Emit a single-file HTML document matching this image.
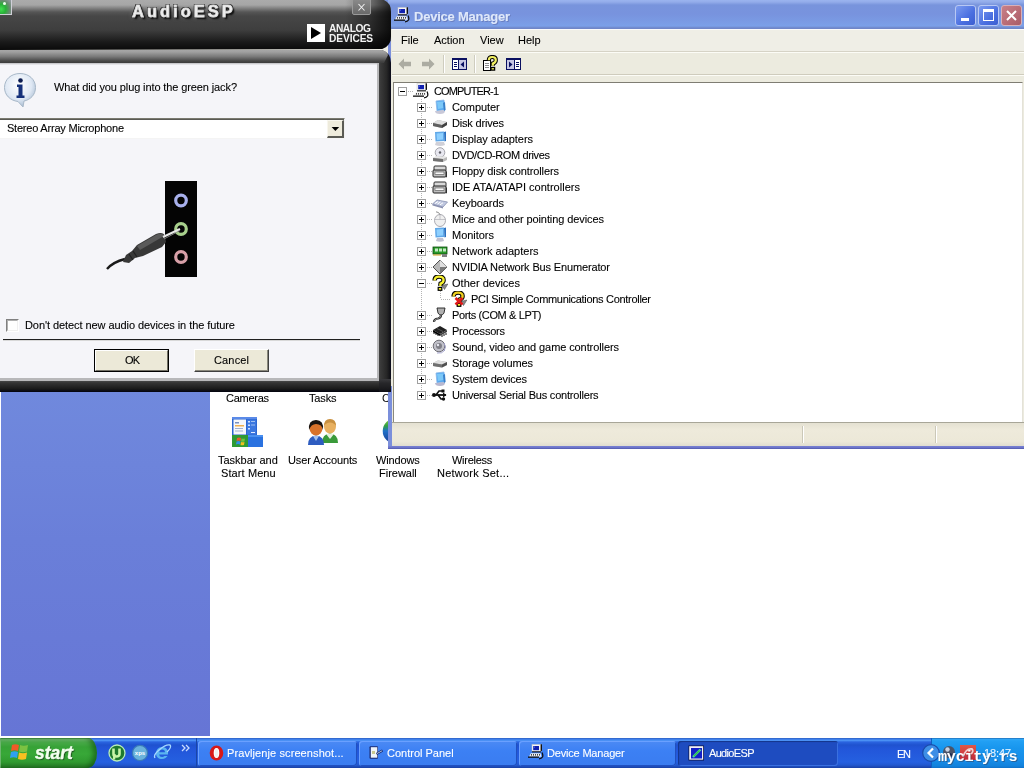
<!DOCTYPE html>
<html><head><meta charset="utf-8"><style>
html,body{margin:0;padding:0;width:1024px;height:768px;overflow:hidden;position:relative;background:#fff;font-family:"Liberation Sans",sans-serif;}
.a{position:absolute;}
span.a{will-change:transform;}
.t{position:absolute;white-space:pre;-webkit-font-smoothing:antialiased;will-change:transform;-webkit-text-stroke:0.1px currentColor;line-height:1;font-family:"Liberation Sans",sans-serif;font-size:11px;color:#000;z-index:50;}
</style></head><body>
<!-- Control panel background -->
<div class="a" style="left:0;top:0;width:1024px;height:738px;background:#fff;"></div>
<div class="a" style="left:0;top:0;width:1024px;height:30px;background:#7a96df;"></div>
<div class="a" style="left:0;top:30px;width:1024px;height:60px;background:#efeee6;"></div>
<div class="a" style="left:1px;top:90px;width:209px;height:646px;background:linear-gradient(#7a98e3,#7089dd 300px,#6a7fd9 450px,#6675d5);"></div>
<span class="a" style="left:381.5px;top:392.7px;font-size:11px;line-height:1;">C</span>
<!-- Taskbar and start menu icon -->
<svg class="a" style="left:231px;top:415px" width="34" height="34" viewBox="0 0 34 34">
  <rect x="1" y="2" width="25" height="19" rx="1.5" fill="#2c66d0"/>
  <rect x="1" y="2" width="25" height="2" fill="#5a8ae8"/>
  <rect x="2.5" y="4.5" width="12.5" height="15" fill="#f6f8fc"/>
  <rect x="4" y="7" width="4" height="1.5" fill="#7890c0"/><rect x="4" y="10" width="9" height="1.5" fill="#f0b050"/>
  <rect x="4" y="13" width="8" height="1" fill="#a0b0d0"/><rect x="4" y="15.5" width="8" height="1" fill="#a0b0d0"/>
  <rect x="16" y="4.5" width="9" height="15" fill="#3c78e0"/>
  <rect x="17" y="6" width="2" height="1.5" fill="#d0e0ff"/><rect x="17" y="9.5" width="2" height="1.5" fill="#d0e0ff"/><rect x="17" y="13" width="2" height="1.5" fill="#d0e0ff"/><rect x="20" y="6" width="4" height="1" fill="#a0c0f0"/><rect x="20" y="9.5" width="4" height="1" fill="#a0c0f0"/><rect x="20" y="17" width="4" height="1" fill="#e0e8ff"/>
  <rect x="1" y="20" width="16" height="12" fill="#2e9a34"/>
  <rect x="17" y="20" width="15" height="12" fill="#2a72e0"/>
  <rect x="17" y="20" width="15" height="2" fill="#4a90f0"/>
  <path d="M6 23 Q8 22 10 23 L9.5 26 Q7.5 25 5.5 26Z" fill="#e85a30"/><path d="M10.5 23.5 Q12.5 24 14 23.5 L13.5 26.5 Q11.5 27 10 26.5Z" fill="#70c040"/>
  <path d="M5.5 26.5 Q7.5 25.5 9.5 26.5 L9 29.5 Q7 28.5 5 29.5Z" fill="#3090e8"/><path d="M10 27 Q12 27.5 13.5 27 L13 30 Q11 30.5 9.5 30Z" fill="#f0c020"/>
</svg>
<!-- User accounts icon -->
<svg class="a" style="left:305px;top:415px" width="36" height="32" viewBox="0 0 36 32">
  <path d="M17 28 Q17 19 25 18.5 Q33 19 33 28 Z" fill="#3a9a3a"/>
  <path d="M21 19 L25 24 L29 19Z" fill="#e8f0e0"/>
  <ellipse cx="25" cy="11.5" rx="6" ry="7" fill="#e8b060"/>
  <path d="M19 11 Q19 4 25 4 Q31 4 31 11 Q29 7.5 25 7.5 Q21 7.5 19 11Z" fill="#c89040"/>
  <path d="M3 30 Q3 21 11 20.5 Q19 21 19 30 Z" fill="#2e5cc0"/>
  <path d="M8 21 L11 26 L14 21Z" fill="#a0c0f0"/>
  <ellipse cx="11" cy="13" rx="6.5" ry="7.5" fill="#d8722a"/>
  <path d="M4 15 Q3 5 11 5 Q19 5 18 15 Q17 9 11 9 Q6 9 4 15Z" fill="#1a1410"/>
</svg>
<!-- firewall globe partial -->
<svg class="a" style="left:380px;top:418px" width="9" height="27" viewBox="0 0 9 27">
  <defs><linearGradient id="gl" x1="0" y1="0" x2="0" y2="1"><stop offset="0" stop-color="#90d040"/><stop offset="0.3" stop-color="#30a040"/><stop offset="0.5" stop-color="#2070c8"/><stop offset="1" stop-color="#1a3a90"/></linearGradient></defs>
  <circle cx="15.5" cy="13" r="12.8" fill="url(#gl)"/>
</svg>
<!-- Device Manager window -->
<div class="a" id="dm" style="left:388px;top:0;width:640px;height:449px;background:#7b8fdb;">
  <div class="a" style="left:3px;top:29px;width:637px;height:417px;background:#ecebdf;"></div>
  <div class="a" style="left:3px;top:386px;width:1px;height:60px;background:#7b8fdb;"></div>
  <div class="a" style="left:0;top:0;width:640px;height:29px;background:linear-gradient(#9ab4ef 0px,#93acea 2px,#7894dc 5px,#7893de 14px,#7a9be4 22px,#7ba0e8 26px,#6f86c8 28px,#6f86c8 29px);"></div>
  <div class="a" style="left:4px;top:29px;width:636px;height:23px;background:#efeee6;border-top:1px solid #fbfbfb;box-sizing:border-box;"></div>
  <div class="a" style="left:4px;top:51px;width:636px;height:1px;background:#d6d3c6;"></div>
  <div class="a" style="left:4px;top:52px;width:636px;height:23px;background:#ecebdf;border-top:1px solid #fcfcf6;box-sizing:border-box;"></div>
  <div class="a" style="left:4px;top:74px;width:636px;height:1px;background:#cfccbd;"></div>
  <div class="a" style="left:4px;top:75px;width:636px;height:7px;background:#ecebdf;border-top:1px solid #fcfcf6;box-sizing:border-box;"></div>
  <div class="a" style="left:5px;top:82px;width:630px;height:341px;background:#fff;border-top:1px solid #7f7d73;border-left:1px solid #8a887d;border-right:1px solid #e4e2d8;box-sizing:border-box;"></div>
  <div class="a" style="left:4px;top:422px;width:636px;height:1px;background:#a8a698;"></div>
  <div class="a" style="left:4px;top:423px;width:636px;height:23px;background:linear-gradient(#e4e1d2,#eeeadb 30%,#ece8d8 80%,#e0ddd0);box-sizing:border-box;"></div>
  <div class="a" style="left:0;top:446px;width:640px;height:3px;background:linear-gradient(#7a82d4,#6a72c8 60%,#5058a8);"></div>
  <div class="a" style="left:414px;top:426px;width:1px;height:17px;background:#cbc8b8;"></div>
  <div class="a" style="left:415px;top:426px;width:1px;height:17px;background:#fff;"></div>
  <div class="a" style="left:547px;top:426px;width:1px;height:17px;background:#cbc8b8;"></div>
  <div class="a" style="left:548px;top:426px;width:1px;height:17px;background:#fff;"></div>
  <!-- title icon -->
  <svg class="a" style="left:6px;top:7px" width="16" height="16" viewBox="0 0 16 16"><rect x="4" y="0.5" width="9" height="7" fill="#f4f4f4" stroke="#c8c8c8" stroke-width="0.5"/><rect x="12.6" y="0.3" width="1.4" height="6.6" fill="#101010"/><rect x="5.2" y="2" width="5.8" height="4.2" fill="#1020b0"/><rect x="5.8" y="2.6" width="1" height="1" fill="#8090f0"/><rect x="4" y="7.3" width="9" height="1.1" fill="#101010"/><path d="M1 12.8 L2.8 9.2 L12.5 9.2 L13.5 12.8Z" fill="#f0f0f0"/><path d="M3 10.9 H12" stroke="#101010" stroke-width="1.1" stroke-dasharray="1 1"/><rect x="0" y="12.5" width="11" height="1.3" fill="#101010"/><path d="M14 8.5 Q15.3 11 14.5 13 Q13.5 14.8 11 14.8" fill="none" stroke="#101010" stroke-width="1.3"/></svg>
  <!-- title buttons -->
  <div class="a" style="left:567px;top:5px;width:21px;height:21px;box-sizing:border-box;border:1px solid #b8c8f4;border-radius:3px;background:linear-gradient(135deg,#7c9cf0,#4a6fe0 60%,#3c5fd0);"></div>
  <div class="a" style="left:573px;top:18px;width:8px;height:3px;background:#fff;"></div>
  <div class="a" style="left:590px;top:5px;width:21px;height:21px;box-sizing:border-box;border:1px solid #b8c8f4;border-radius:3px;background:linear-gradient(135deg,#7c9cf0,#4a6fe0 60%,#3c5fd0);"></div>
  <div class="a" style="left:595px;top:9px;width:11px;height:12px;box-sizing:border-box;border:1.5px solid #fff;border-top-width:3px;"></div>
  <div class="a" style="left:613px;top:5px;width:21px;height:21px;box-sizing:border-box;border:1px solid #d8b0b8;border-radius:3px;background:linear-gradient(135deg,#c88088,#b86a74 60%,#a85c68);"></div>
  <svg class="a" style="left:613px;top:5px" width="21" height="21" viewBox="0 0 21 21"><path d="M6 6 L15 15 M15 6 L6 15" stroke="#fff" stroke-width="2"/></svg>
  <!-- toolbar -->
  <svg class="a" style="left:10px;top:57px" width="14" height="14" viewBox="0 0 14 14"><path d="M0.5 7 L6 1.5 L6 4.8 L13 4.8 L13 9.2 L6 9.2 L6 12.5Z" fill="#acaca2"/></svg>
  <svg class="a" style="left:33px;top:57px" width="14" height="14" viewBox="0 0 14 14"><path d="M13.5 7 L8 1.5 L8 4.8 L1 4.8 L1 9.2 L8 9.2 L8 12.5Z" fill="#acaca2"/></svg>
  <div class="a" style="left:55px;top:55px;width:1px;height:18px;background:#cfcdbf;"></div>
  <div class="a" style="left:56px;top:55px;width:1px;height:18px;background:#fff;"></div>
  <svg class="a" style="left:64px;top:58px" width="15" height="12" viewBox="0 0 15 12" shape-rendering="crispEdges"><rect x="0" y="0" width="15" height="12" fill="#0a1060"/><rect x="1" y="2" width="5" height="9" fill="#fff"/><rect x="7" y="2" width="7" height="9" fill="#c8c8e4"/><rect x="2" y="4" width="3" height="1" fill="#0a1060"/><rect x="2" y="6" width="3" height="1" fill="#0a1060"/><rect x="2" y="8" width="3" height="1" fill="#0a1060"/><path d="M12 3.5 L8.5 6.5 L12 9.5Z" fill="#0a1060" shape-rendering="auto"/></svg>
  <div class="a" style="left:86px;top:55px;width:1px;height:18px;background:#cfcdbf;"></div>
  <div class="a" style="left:87px;top:55px;width:1px;height:18px;background:#fff;"></div>
  <svg class="a" style="left:94px;top:55px" width="16" height="17" viewBox="0 0 16 17" shape-rendering="crispEdges"><rect x="1" y="5" width="8" height="11" fill="#000"/><rect x="2" y="6" width="6" height="9" fill="#fff"/><rect x="3" y="8" width="4" height="1" fill="#8c8c8c"/><rect x="3" y="10" width="4" height="1" fill="#8c8c8c"/><rect x="3" y="12" width="4" height="1" fill="#8c8c8c"/></svg><svg class="a" style="left:94px;top:55px" width="16" height="17" viewBox="0 0 16 17"><path d="M6.8 5.2 Q6.8 2 10.2 2 Q13.8 2 13.8 5 Q13.8 7.6 10.8 8.6 L10.8 10.8" fill="none" stroke="#000" stroke-width="4.2"/><path d="M6.8 5.2 Q6.8 2 10.2 2 Q13.8 2 13.8 5 Q13.8 7.6 10.8 8.6 L10.8 10.8" fill="none" stroke="#f2f060" stroke-width="2.2"/><rect x="9" y="12.5" width="3.6" height="2.6" fill="#f2f060" stroke="#000" stroke-width="1.3"/></svg>
  <svg class="a" style="left:118px;top:58px" width="15" height="12" viewBox="0 0 15 12" shape-rendering="crispEdges"><rect x="0" y="0" width="15" height="12" fill="#0a1060"/><rect x="1" y="2" width="7" height="9" fill="#c8c8e4"/><rect x="9" y="2" width="5" height="9" fill="#fff"/><rect x="10" y="4" width="3" height="1" fill="#0a1060"/><rect x="10" y="6" width="3" height="1" fill="#0a1060"/><rect x="10" y="8" width="3" height="1" fill="#0a1060"/><path d="M3 3.5 L6.5 6.5 L3 9.5Z" fill="#0a1060" shape-rendering="auto"/></svg>
</div>
<div class="a" style="left:398px;top:87px;width:9px;height:9px;box-sizing:border-box;border:1px solid #a0a0a0;background:#fff;z-index:6;"></div><div class="a" style="left:400px;top:91px;width:5px;height:1px;background:#000;z-index:7;"></div>
<div class="a" style="left:408px;top:91px;width:5px;height:1px;z-index:4;background:repeating-linear-gradient(90deg,#b4b4b4 0,#b4b4b4 1px,transparent 1px,transparent 2px);"></div>
<svg class="a" style="left:413px;top:83px;z-index:5" width="16" height="16" viewBox="0 0 16 16"><rect x="4" y="0.5" width="9" height="7" fill="#f4f4f4" stroke="#c8c8c8" stroke-width="0.5"/><rect x="12.6" y="0.3" width="1.4" height="6.6" fill="#101010"/><rect x="5.2" y="2" width="5.8" height="4.2" fill="#1020b0"/><rect x="5.8" y="2.6" width="1" height="1" fill="#8090f0"/><rect x="4" y="7.3" width="9" height="1.1" fill="#101010"/><path d="M1 12.8 L2.8 9.2 L12.5 9.2 L13.5 12.8Z" fill="#f0f0f0"/><path d="M3 10.9 H12" stroke="#101010" stroke-width="1.1" stroke-dasharray="1 1"/><rect x="0" y="12.5" width="11" height="1.3" fill="#101010"/><path d="M14 8.5 Q15.3 11 14.5 13 Q13.5 14.8 11 14.8" fill="none" stroke="#101010" stroke-width="1.3"/></svg>
<div class="a" style="left:421px;top:99px;width:1px;height:296px;z-index:4;background:repeating-linear-gradient(180deg,#b4b4b4 0,#b4b4b4 1px,transparent 1px,transparent 2px);"></div>
<div class="a" style="left:417px;top:103px;width:9px;height:9px;box-sizing:border-box;border:1px solid #a0a0a0;background:#fff;z-index:6;"></div><div class="a" style="left:419px;top:107px;width:5px;height:1px;background:#000;z-index:7;"></div><div class="a" style="left:421px;top:105px;width:1px;height:5px;background:#000;z-index:7;"></div>
<div class="a" style="left:427px;top:107px;width:5px;height:1px;z-index:4;background:repeating-linear-gradient(90deg,#b4b4b4 0,#b4b4b4 1px,transparent 1px,transparent 2px);"></div>
<svg class="a" style="left:432px;top:99px;z-index:5" width="16" height="16" viewBox="0 0 16 16"><path d="M4 2 L12 1 L13 11 L5 12Z" fill="#5aaaf0" stroke="#8ab8e8" stroke-width="0.8"/><path d="M5 3 L11 2.5 L11.5 9 L6 10Z" fill="#7cc8f8"/><path d="M3 12 Q3 15 8 15 Q13 15 13 12 L11 11 L5 12Z" fill="#c8c8d8"/><path d="M11 4 L13 3 L13.5 11 L12 12Z" fill="#3a80c8"/></svg>
<div class="a" style="left:417px;top:119px;width:9px;height:9px;box-sizing:border-box;border:1px solid #a0a0a0;background:#fff;z-index:6;"></div><div class="a" style="left:419px;top:123px;width:5px;height:1px;background:#000;z-index:7;"></div><div class="a" style="left:421px;top:121px;width:1px;height:5px;background:#000;z-index:7;"></div>
<div class="a" style="left:427px;top:123px;width:5px;height:1px;z-index:4;background:repeating-linear-gradient(90deg,#b4b4b4 0,#b4b4b4 1px,transparent 1px,transparent 2px);"></div>
<svg class="a" style="left:432px;top:115px;z-index:5" width="16" height="16" viewBox="0 0 16 16"><path d="M1 8 L6 5 L15 7 L15 10 L10 13 L1 11Z" fill="#a8a8a8"/><path d="M1 8 L6 5 L15 7 L10 10Z" fill="#e0e0e0"/><path d="M1 8 L10 10 L10 13 L1 11Z" fill="#606060"/><path d="M10 10 L15 7 L15 10 L10 13Z" fill="#404040"/></svg>
<div class="a" style="left:417px;top:135px;width:9px;height:9px;box-sizing:border-box;border:1px solid #a0a0a0;background:#fff;z-index:6;"></div><div class="a" style="left:419px;top:139px;width:5px;height:1px;background:#000;z-index:7;"></div><div class="a" style="left:421px;top:137px;width:1px;height:5px;background:#000;z-index:7;"></div>
<div class="a" style="left:427px;top:139px;width:5px;height:1px;z-index:4;background:repeating-linear-gradient(90deg,#b4b4b4 0,#b4b4b4 1px,transparent 1px,transparent 2px);"></div>
<svg class="a" style="left:432px;top:131px;z-index:5" width="16" height="16" viewBox="0 0 16 16"><path d="M3 1 L12 0.5 L12.5 10 L3.5 10.5Z" fill="#60a8e8"/><path d="M4.5 2.5 L11 2 L11 8.5 L5 9Z" fill="#8ed0ff"/><path d="M4 11 L12 11 L13 14 Q8 16 3 14Z" fill="#d0d0d8"/><path d="M12 1 L14 0.5 L14 10 L12.5 10.5Z" fill="#2a70c0"/></svg>
<div class="a" style="left:417px;top:151px;width:9px;height:9px;box-sizing:border-box;border:1px solid #a0a0a0;background:#fff;z-index:6;"></div><div class="a" style="left:419px;top:155px;width:5px;height:1px;background:#000;z-index:7;"></div><div class="a" style="left:421px;top:153px;width:1px;height:5px;background:#000;z-index:7;"></div>
<div class="a" style="left:427px;top:155px;width:5px;height:1px;z-index:4;background:repeating-linear-gradient(90deg,#b4b4b4 0,#b4b4b4 1px,transparent 1px,transparent 2px);"></div>
<svg class="a" style="left:432px;top:147px;z-index:5" width="16" height="16" viewBox="0 0 16 16"><circle cx="8" cy="5.5" r="4.8" fill="#e8e8f0" stroke="#909098" stroke-width="0.8"/><circle cx="8" cy="5.5" r="1.2" fill="#606068"/><path d="M1 11 L5 9 L15 10 L15 13 L11 15 L1 14Z" fill="#b8b8b8"/><path d="M1 11 L5 9 L15 10 L11 12Z" fill="#e8e8e8"/><path d="M1 11 L11 12 L11 15 L1 14Z" fill="#707070"/></svg>
<div class="a" style="left:417px;top:167px;width:9px;height:9px;box-sizing:border-box;border:1px solid #a0a0a0;background:#fff;z-index:6;"></div><div class="a" style="left:419px;top:171px;width:5px;height:1px;background:#000;z-index:7;"></div><div class="a" style="left:421px;top:169px;width:1px;height:5px;background:#000;z-index:7;"></div>
<div class="a" style="left:427px;top:171px;width:5px;height:1px;z-index:4;background:repeating-linear-gradient(90deg,#b4b4b4 0,#b4b4b4 1px,transparent 1px,transparent 2px);"></div>
<svg class="a" style="left:432px;top:163px;z-index:5" width="16" height="16" viewBox="0 0 16 16"><rect x="2" y="3" width="12" height="5" rx="1" fill="#d8d8d8" stroke="#303030"/><rect x="1" y="7" width="13" height="7" rx="1" fill="#c0c0c0" stroke="#202020"/><rect x="3" y="9" width="9" height="2.5" fill="#f8f8f8" stroke="#505050" stroke-width="0.6"/><path d="M14 8 L15 9 L15 14 L14 14.5" fill="#303030"/></svg>
<div class="a" style="left:417px;top:183px;width:9px;height:9px;box-sizing:border-box;border:1px solid #a0a0a0;background:#fff;z-index:6;"></div><div class="a" style="left:419px;top:187px;width:5px;height:1px;background:#000;z-index:7;"></div><div class="a" style="left:421px;top:185px;width:1px;height:5px;background:#000;z-index:7;"></div>
<div class="a" style="left:427px;top:187px;width:5px;height:1px;z-index:4;background:repeating-linear-gradient(90deg,#b4b4b4 0,#b4b4b4 1px,transparent 1px,transparent 2px);"></div>
<svg class="a" style="left:432px;top:179px;z-index:5" width="16" height="16" viewBox="0 0 16 16"><rect x="2" y="3" width="12" height="5" rx="1" fill="#d8d8d8" stroke="#303030"/><rect x="1" y="7" width="13" height="7" rx="1" fill="#c0c0c0" stroke="#202020"/><rect x="3" y="9" width="9" height="2.5" fill="#f8f8f8" stroke="#505050" stroke-width="0.6"/><path d="M14 8 L15 9 L15 14 L14 14.5" fill="#303030"/></svg>
<div class="a" style="left:417px;top:199px;width:9px;height:9px;box-sizing:border-box;border:1px solid #a0a0a0;background:#fff;z-index:6;"></div><div class="a" style="left:419px;top:203px;width:5px;height:1px;background:#000;z-index:7;"></div><div class="a" style="left:421px;top:201px;width:1px;height:5px;background:#000;z-index:7;"></div>
<div class="a" style="left:427px;top:203px;width:5px;height:1px;z-index:4;background:repeating-linear-gradient(90deg,#b4b4b4 0,#b4b4b4 1px,transparent 1px,transparent 2px);"></div>
<svg class="a" style="left:432px;top:195px;z-index:5" width="16" height="16" viewBox="0 0 16 16"><path d="M0.5 9 L5 5 L15.5 7 L11 12Z" fill="#c0c8e0" stroke="#8890b0" stroke-width="0.8"/><path d="M0.5 9 L11 12 L11 13.5 L0.5 10.5Z" fill="#8890b0"/><path d="M3 8.5 L6 6.5 M5.5 9 L8.5 7 M8 9.8 L11 7.8" stroke="#ffffff" stroke-width="1"/></svg>
<div class="a" style="left:417px;top:215px;width:9px;height:9px;box-sizing:border-box;border:1px solid #a0a0a0;background:#fff;z-index:6;"></div><div class="a" style="left:419px;top:219px;width:5px;height:1px;background:#000;z-index:7;"></div><div class="a" style="left:421px;top:217px;width:1px;height:5px;background:#000;z-index:7;"></div>
<div class="a" style="left:427px;top:219px;width:5px;height:1px;z-index:4;background:repeating-linear-gradient(90deg,#b4b4b4 0,#b4b4b4 1px,transparent 1px,transparent 2px);"></div>
<svg class="a" style="left:432px;top:211px;z-index:5" width="16" height="16" viewBox="0 0 16 16"><ellipse cx="8" cy="9.5" rx="5.5" ry="6" fill="#f0f0f0" stroke="#a0a0a8" stroke-width="0.9"/><path d="M8 3.5 V8.5 M2.6 8.5 H13.4" stroke="#b0b0b8" stroke-width="0.7"/><path d="M8 3.5 Q7 1 4 0.8" fill="none" stroke="#707070" stroke-width="0.8"/></svg>
<div class="a" style="left:417px;top:231px;width:9px;height:9px;box-sizing:border-box;border:1px solid #a0a0a0;background:#fff;z-index:6;"></div><div class="a" style="left:419px;top:235px;width:5px;height:1px;background:#000;z-index:7;"></div><div class="a" style="left:421px;top:233px;width:1px;height:5px;background:#000;z-index:7;"></div>
<div class="a" style="left:427px;top:235px;width:5px;height:1px;z-index:4;background:repeating-linear-gradient(90deg,#b4b4b4 0,#b4b4b4 1px,transparent 1px,transparent 2px);"></div>
<svg class="a" style="left:432px;top:227px;z-index:5" width="16" height="16" viewBox="0 0 16 16"><path d="M3 1 L12 0.5 L12.5 10 L3.5 10.5Z" fill="#60a8e8"/><path d="M4.5 2.5 L11 2 L11 8.5 L5 9Z" fill="#8ed0ff"/><path d="M5 11 L11 11 L12 14 Q8 15.5 4 14Z" fill="#c0c0d0"/><path d="M12 1 L14 0.5 L14 10 L12.5 10.5Z" fill="#2a70c0"/></svg>
<div class="a" style="left:417px;top:247px;width:9px;height:9px;box-sizing:border-box;border:1px solid #a0a0a0;background:#fff;z-index:6;"></div><div class="a" style="left:419px;top:251px;width:5px;height:1px;background:#000;z-index:7;"></div><div class="a" style="left:421px;top:249px;width:1px;height:5px;background:#000;z-index:7;"></div>
<div class="a" style="left:427px;top:251px;width:5px;height:1px;z-index:4;background:repeating-linear-gradient(90deg,#b4b4b4 0,#b4b4b4 1px,transparent 1px,transparent 2px);"></div>
<svg class="a" style="left:432px;top:243px;z-index:5" width="16" height="16" viewBox="0 0 16 16"><rect x="1" y="4" width="14" height="7" fill="#2a9a2a" stroke="#0a4a0a" stroke-width="0.8"/><rect x="3" y="5.5" width="3" height="3" fill="#c8e8c8"/><rect x="7" y="5.5" width="3" height="3" fill="#c8e8c8"/><rect x="11" y="5.5" width="3" height="3" fill="#c8e8c8"/><path d="M2 11 V13 M4 11 V13 M6 11 V13 M8 11 V13" stroke="#d0a020"/><rect x="10" y="11" width="5" height="3" fill="#808080"/></svg>
<div class="a" style="left:417px;top:263px;width:9px;height:9px;box-sizing:border-box;border:1px solid #a0a0a0;background:#fff;z-index:6;"></div><div class="a" style="left:419px;top:267px;width:5px;height:1px;background:#000;z-index:7;"></div><div class="a" style="left:421px;top:265px;width:1px;height:5px;background:#000;z-index:7;"></div>
<div class="a" style="left:427px;top:267px;width:5px;height:1px;z-index:4;background:repeating-linear-gradient(90deg,#b4b4b4 0,#b4b4b4 1px,transparent 1px,transparent 2px);"></div>
<svg class="a" style="left:432px;top:259px;z-index:5" width="16" height="16" viewBox="0 0 16 16"><path d="M8 1 L15 8 L8 15 L1 8Z" fill="#b8b8b8" stroke="#404040" stroke-width="0.9"/><path d="M8 1 L15 8 L8 8Z" fill="#e0e0e0"/><path d="M8 15 L15 8 L8 8 Z" fill="#7a7a7a"/></svg>
<div class="a" style="left:417px;top:279px;width:9px;height:9px;box-sizing:border-box;border:1px solid #a0a0a0;background:#fff;z-index:6;"></div><div class="a" style="left:419px;top:283px;width:5px;height:1px;background:#000;z-index:7;"></div>
<div class="a" style="left:427px;top:283px;width:5px;height:1px;z-index:4;background:repeating-linear-gradient(90deg,#b4b4b4 0,#b4b4b4 1px,transparent 1px,transparent 2px);"></div>
<svg class="a" style="left:432px;top:275px;z-index:5" width="16" height="16" viewBox="0 0 16 16"><path d="M10 10.5 L15.8 9 L12.5 14.5Z" fill="#8a8a8a" stroke="#505050" stroke-width="0.6"/><path d="M2.6 5.6 Q2.6 1.6 7 1.6 Q11.6 1.6 11.6 5 Q11.6 7.6 8.6 8.6 L8.2 11" fill="none" stroke="#000" stroke-width="4.4"/><path d="M2.6 5.6 Q2.6 1.6 7 1.6 Q11.6 1.6 11.6 5 Q11.6 7.6 8.6 8.6 L8.2 11" fill="none" stroke="#f6f030" stroke-width="2.4"/><rect x="6.2" y="12.4" width="3.6" height="2.9" fill="#f6f030" stroke="#000" stroke-width="1.2"/></svg>
<div class="a" style="left:440px;top:291px;width:1px;height:8px;z-index:4;background:repeating-linear-gradient(180deg,#b4b4b4 0,#b4b4b4 1px,transparent 1px,transparent 2px);"></div>
<div class="a" style="left:441px;top:299px;width:10px;height:1px;z-index:4;background:repeating-linear-gradient(90deg,#b4b4b4 0,#b4b4b4 1px,transparent 1px,transparent 2px);"></div>
<svg class="a" style="left:451px;top:291px;z-index:5" width="16" height="16" viewBox="0 0 16 16"><path d="M10 10.5 L15.8 9 L12.5 14.5Z" fill="#8a8a8a" stroke="#505050" stroke-width="0.6"/><path d="M2.6 5.6 Q2.6 1.6 7 1.6 Q11.6 1.6 11.6 5 Q11.6 7.6 8.6 8.6 L8.2 11" fill="none" stroke="#000" stroke-width="4.4"/><path d="M2.6 5.6 Q2.6 1.6 7 1.6 Q11.6 1.6 11.6 5 Q11.6 7.6 8.6 8.6 L8.2 11" fill="none" stroke="#f0d020" stroke-width="2.4"/><rect x="6.2" y="12.4" width="3.6" height="2.9" fill="#f6f030" stroke="#000" stroke-width="1.2"/><path d="M4.5 7 L11.5 13.5 M11.5 7 L4.5 13.5" stroke="#e01818" stroke-width="2.6"/></svg>
<div class="a" style="left:417px;top:311px;width:9px;height:9px;box-sizing:border-box;border:1px solid #a0a0a0;background:#fff;z-index:6;"></div><div class="a" style="left:419px;top:315px;width:5px;height:1px;background:#000;z-index:7;"></div><div class="a" style="left:421px;top:313px;width:1px;height:5px;background:#000;z-index:7;"></div>
<div class="a" style="left:427px;top:315px;width:5px;height:1px;z-index:4;background:repeating-linear-gradient(90deg,#b4b4b4 0,#b4b4b4 1px,transparent 1px,transparent 2px);"></div>
<svg class="a" style="left:432px;top:307px;z-index:5" width="16" height="16" viewBox="0 0 16 16"><path d="M5 1 H13 L12 6 Q11 8 9 8 Q7 8 6 6Z" fill="#b0b0b0" stroke="#202020" stroke-width="0.9"/><path d="M9 8 Q9 11 6 11.5 Q2 12 2 15" fill="none" stroke="#202020" stroke-width="2.2"/><path d="M9 8 Q9 11 6 11.5 Q2 12 2 15" fill="none" stroke="#a0a0a0" stroke-width="0.8"/></svg>
<div class="a" style="left:417px;top:327px;width:9px;height:9px;box-sizing:border-box;border:1px solid #a0a0a0;background:#fff;z-index:6;"></div><div class="a" style="left:419px;top:331px;width:5px;height:1px;background:#000;z-index:7;"></div><div class="a" style="left:421px;top:329px;width:1px;height:5px;background:#000;z-index:7;"></div>
<div class="a" style="left:427px;top:331px;width:5px;height:1px;z-index:4;background:repeating-linear-gradient(90deg,#b4b4b4 0,#b4b4b4 1px,transparent 1px,transparent 2px);"></div>
<svg class="a" style="left:432px;top:323px;z-index:5" width="16" height="16" viewBox="0 0 16 16"><path d="M1 7 L8 3 L15 7 L8 11Z" fill="#202020"/><path d="M1 7 L8 11 L8 13 L1 9Z" fill="#000"/><path d="M8 11 L15 7 L15 9 L8 13Z" fill="#404040"/><path d="M2 9 L2 11 M4 10 L4 12 M6 11 L6 13 M10 12 V14 M12 11 V13 M14 10 V12" stroke="#101010"/><path d="M5 5.5 L11 8.5" stroke="#606060" stroke-width="0.8"/></svg>
<div class="a" style="left:417px;top:343px;width:9px;height:9px;box-sizing:border-box;border:1px solid #a0a0a0;background:#fff;z-index:6;"></div><div class="a" style="left:419px;top:347px;width:5px;height:1px;background:#000;z-index:7;"></div><div class="a" style="left:421px;top:345px;width:1px;height:5px;background:#000;z-index:7;"></div>
<div class="a" style="left:427px;top:347px;width:5px;height:1px;z-index:4;background:repeating-linear-gradient(90deg,#b4b4b4 0,#b4b4b4 1px,transparent 1px,transparent 2px);"></div>
<svg class="a" style="left:432px;top:339px;z-index:5" width="16" height="16" viewBox="0 0 16 16"><circle cx="7" cy="7" r="5.8" fill="#c0c0c8" stroke="#606068" stroke-width="0.9"/><circle cx="7" cy="7" r="3" fill="#808088"/><circle cx="6" cy="6" r="1.2" fill="#e8e8f0"/><path d="M12 4 Q15 8 12 12 M13 11 Q10 15 5 14" fill="none" stroke="#a0a0c8" stroke-width="1"/></svg>
<div class="a" style="left:417px;top:359px;width:9px;height:9px;box-sizing:border-box;border:1px solid #a0a0a0;background:#fff;z-index:6;"></div><div class="a" style="left:419px;top:363px;width:5px;height:1px;background:#000;z-index:7;"></div><div class="a" style="left:421px;top:361px;width:1px;height:5px;background:#000;z-index:7;"></div>
<div class="a" style="left:427px;top:363px;width:5px;height:1px;z-index:4;background:repeating-linear-gradient(90deg,#b4b4b4 0,#b4b4b4 1px,transparent 1px,transparent 2px);"></div>
<svg class="a" style="left:432px;top:355px;z-index:5" width="16" height="16" viewBox="0 0 16 16"><path d="M1 8 L6 5.5 L15 7 L15 10 L10 12.5 L1 11Z" fill="#a8a8a8"/><path d="M1 8 L6 5.5 L15 7 L10 9.5Z" fill="#e0e0e0"/><path d="M1 8 L10 9.5 L10 12.5 L1 11Z" fill="#707070"/><path d="M10 9.5 L15 7 L15 10 L10 12.5Z" fill="#505050"/></svg>
<div class="a" style="left:417px;top:375px;width:9px;height:9px;box-sizing:border-box;border:1px solid #a0a0a0;background:#fff;z-index:6;"></div><div class="a" style="left:419px;top:379px;width:5px;height:1px;background:#000;z-index:7;"></div><div class="a" style="left:421px;top:377px;width:1px;height:5px;background:#000;z-index:7;"></div>
<div class="a" style="left:427px;top:379px;width:5px;height:1px;z-index:4;background:repeating-linear-gradient(90deg,#b4b4b4 0,#b4b4b4 1px,transparent 1px,transparent 2px);"></div>
<svg class="a" style="left:432px;top:371px;z-index:5" width="16" height="16" viewBox="0 0 16 16"><path d="M4 2 L12 1 L13 11 L5 12Z" fill="#5aaaf0" stroke="#8ab8e8" stroke-width="0.8"/><path d="M5 3 L11 2.5 L11.5 9 L6 10Z" fill="#7cc8f8"/><path d="M3 12 Q3 15 8 15 Q13 15 13 12 L11 11 L5 12Z" fill="#b8b8d0"/><path d="M11 4 L13 3 L13.5 11 L12 12Z" fill="#3a80c8"/></svg>
<div class="a" style="left:417px;top:391px;width:9px;height:9px;box-sizing:border-box;border:1px solid #a0a0a0;background:#fff;z-index:6;"></div><div class="a" style="left:419px;top:395px;width:5px;height:1px;background:#000;z-index:7;"></div><div class="a" style="left:421px;top:393px;width:1px;height:5px;background:#000;z-index:7;"></div>
<div class="a" style="left:427px;top:395px;width:5px;height:1px;z-index:4;background:repeating-linear-gradient(90deg,#b4b4b4 0,#b4b4b4 1px,transparent 1px,transparent 2px);"></div>
<svg class="a" style="left:432px;top:387px;z-index:5" width="16" height="16" viewBox="0 0 16 16"><path d="M1 8 H14" stroke="#101010" stroke-width="1.8"/><path d="M14.5 8 L11 5.5 V10.5Z" fill="#101010"/><path d="M4 8 L7 4 H10" fill="none" stroke="#101010" stroke-width="1.6"/><path d="M6 8 L9 12 H11" fill="none" stroke="#101010" stroke-width="1.6"/><rect x="9.5" y="2.5" width="3" height="3" fill="#101010"/><circle cx="11.5" cy="12" r="1.7" fill="#101010"/><circle cx="2" cy="8" r="2" fill="#101010"/></svg><!-- AudioESP window -->
<div class="a" id="ae" style="left:0;top:0;width:392px;height:392px;z-index:20;">
  <svg class="a" style="left:0;top:0" width="392" height="392" viewBox="0 0 392 392">
    <defs>
      <linearGradient id="hg" gradientUnits="userSpaceOnUse" x1="0" y1="0" x2="0" y2="50">
        <stop offset="0" stop-color="#ababab"/><stop offset="0.1" stop-color="#a6a6a6"/><stop offset="0.24" stop-color="#565656"/><stop offset="0.32" stop-color="#474747"/>
        <stop offset="0.6" stop-color="#3e3e3e"/><stop offset="0.84" stop-color="#1a1a1a"/><stop offset="1" stop-color="#0a0a0a"/>
      </linearGradient>
      <linearGradient id="gb" gradientUnits="userSpaceOnUse" x1="0" y1="50" x2="0" y2="63">
        <stop offset="0" stop-color="#a6a6a6"/><stop offset="0.15" stop-color="#a0a0a0"/><stop offset="0.5" stop-color="#7a7a7a"/><stop offset="0.85" stop-color="#464646"/><stop offset="1" stop-color="#3c3c3c"/>
      </linearGradient>
      <linearGradient id="rf" gradientUnits="userSpaceOnUse" x1="377" y1="0" x2="391" y2="0">
        <stop offset="0" stop-color="#484848"/><stop offset="0.3" stop-color="#383838"/><stop offset="0.7" stop-color="#262626"/><stop offset="0.9" stop-color="#141418"/><stop offset="1" stop-color="#0a0a1e"/>
      </linearGradient>
      <linearGradient id="bf" gradientUnits="userSpaceOnUse" x1="0" y1="379" x2="0" y2="392">
        <stop offset="0" stop-color="#5a5a5a"/><stop offset="0.3" stop-color="#343434"/><stop offset="0.75" stop-color="#1a1a1a"/><stop offset="1" stop-color="#02030e"/>
      </linearGradient>
    </defs>
    <linearGradient id="hr" gradientUnits="userSpaceOnUse" x1="345" y1="0" x2="391" y2="0"><stop offset="0" stop-color="#000" stop-opacity="0"/><stop offset="0.55" stop-color="#000" stop-opacity="0.35"/><stop offset="1" stop-color="#000" stop-opacity="0.8"/></linearGradient>
    <path d="M0 0 H384 Q391 3 391 12 V36 Q391 46 382 49 L0 50Z" fill="url(#hg)"/>
    <path d="M0 0 H384 Q391 3 391 12 V36 Q391 46 382 49 L0 50Z" fill="url(#hr)"/>
    <path d="M0 50 H382 Q391 53 391 63 V392 H0Z" fill="url(#rf)"/>
    <path d="M0 50 H382 Q386 51 388 55 L384 63 H0Z" fill="url(#gb)"/>
    <path d="M0 379 H379 L391 379 V388 Q391 392 387 392 H0Z" fill="url(#bf)"/>
    <path d="M379 379 L391 379 L391 389 L388 392 L379 392Z" fill="#1c1c22" opacity="0.5"/>
    <rect x="0" y="63" width="379" height="318" fill="#b8b8ba"/>
    <rect x="0" y="63" width="377" height="315" fill="#f5f5f9"/>
    <rect x="0" y="63" width="377" height="2" fill="#c8c8cc"/><rect x="0" y="64" width="377" height="1" fill="#e4e4e8"/>
  </svg>
  <!-- top-left green icon -->
  <div class="a" style="left:-1px;top:-1px;width:13px;height:16px;box-sizing:border-box;border:1px solid #d0d0d8;background:radial-gradient(circle at 10% 65%,#40e050,#28b038 35%,#6a8a70 65%,#9a9aa8);"></div><div class="a" style="left:3px;top:2px;width:3px;height:3px;border-radius:50%;background:#f0fff0;"></div>
  <!-- AudioESP logo -->
  <span class="a" style="left:131.5px;top:2.5px;font:bold 16.5px 'Liberation Sans',sans-serif;letter-spacing:3.0px;color:#f0f0f0;-webkit-text-stroke:0.8px #dcdcdc;line-height:1;text-shadow:-1px -1px 0 #2a2a2a,1px -1px 0 #2a2a2a,-1px 1px 0 #2a2a2a,1px 1px 0 #181818,2px 2px 2px #000,0 0 5px rgba(190,190,190,0.5);">AudioESP</span>
  <!-- close X -->
  <div class="a" style="left:352px;top:-3px;width:19px;height:18px;box-sizing:border-box;border:1px solid #9a9a9a;border-radius:2px;background:linear-gradient(#8e8e8e,#6a6a6a);"></div>
  <svg class="a" style="left:352px;top:0" width="19" height="15" viewBox="0 0 19 15"><path d="M6.5 4 L12.5 10.5 M12.5 4 L6.5 10.5" stroke="#f0f0f0" stroke-width="1.1"/></svg>
  <!-- analog devices logo -->
  <div class="a" style="left:307px;top:24px;width:18px;height:18px;background:#fff;"></div>
  <svg class="a" style="left:307px;top:24px" width="18" height="18" viewBox="0 0 18 18"><path d="M4 3 L14 9 L4 15Z" fill="#000"/></svg>
  <span class="a" style="left:328.5px;top:23.9px;font:bold 10.2px 'Liberation Sans',sans-serif;letter-spacing:-0.45px;color:#f4f4f4;line-height:1;">ANALOG</span>
  <span class="a" style="left:328.5px;top:33.7px;font:bold 10.2px 'Liberation Sans',sans-serif;letter-spacing:-0.1px;color:#f4f4f4;line-height:1;">DEVICES</span>
  <!-- info icon -->
  <svg class="a" style="left:2px;top:72px" width="36" height="36" viewBox="0 0 36 36">
    <defs><radialGradient id="ig" cx="0.45" cy="0.35" r="0.7"><stop offset="0" stop-color="#ffffff"/><stop offset="0.6" stop-color="#dfe8f4"/><stop offset="1" stop-color="#9fb4cc"/></radialGradient></defs>
    <path d="M18 1.5 C27 1.5 33.5 7.5 33.5 15.5 C33.5 23 28 28 22 29 L21 35 L16 29.5 C8 28.5 2.5 23 2.5 15.5 C2.5 7.5 9 1.5 18 1.5Z" fill="url(#ig)" stroke="#a8b8c8" stroke-width="1"/>
    <circle cx="18.5" cy="8.5" r="2.3" fill="#0c1c50"/>
    <path d="M15 12.5 H20.5 V23.5 H22.5 V26 H14.5 V23.5 H16.5 V15 H15Z" fill="#14307a"/>
  </svg>
  <!-- dropdown -->
  <div class="a" style="left:-2px;top:118px;width:347px;height:21px;box-sizing:border-box;border-top:1px solid #7a7a70;border-left:1px solid #7a7a70;border-bottom:1px solid #f4f4f4;border-right:1px solid #f0f0f0;background:#fff;"></div>
  <div class="a" style="left:0;top:119px;width:344px;height:1px;background:#5a5a54;"></div>
  <div class="a" style="left:327px;top:120px;width:17px;height:18px;box-sizing:border-box;border-top:1px solid #f8f6ee;border-left:1px solid #f8f6ee;border-right:2px solid #5a5a54;border-bottom:2px solid #5a5a54;background:#eeebdc;"></div>
  <svg class="a" style="left:327px;top:120px" width="17" height="17" viewBox="0 0 17 17"><path d="M4.6 7 H12.2 L8.4 11Z" fill="#000"/></svg>
  <!-- jack panel -->
  <svg class="a" style="left:100px;top:175px" width="110" height="110" viewBox="0 0 110 110">
    <rect x="65" y="6" width="32" height="96" fill="#040404"/>
    <circle cx="81" cy="25.5" r="5.3" fill="none" stroke="#a8b0ec" stroke-width="3.2"/>
    <circle cx="81" cy="54" r="5.3" fill="none" stroke="#a8d08c" stroke-width="3.2"/>
    <circle cx="81" cy="82" r="5.3" fill="none" stroke="#d8a0a8" stroke-width="3.2"/>
    <path d="M7 94 Q13 87 25 84" fill="none" stroke="#1a1a1a" stroke-width="2.4"/>
    <path d="M23 87 L26 80 L32 76 L37 70 L56 59 Q63 56 65 61 L66 67 L62 72 L43 81 L35 83 L29 88Z" fill="#383838"/>
    <path d="M37 71 L56 60 Q62 57 64 61 L40 75Z" fill="#5a5a5a"/><path d="M29 79 L33 85 M33 76 L37 82" stroke="#202020" stroke-width="1.2"/>
    <path d="M63 62 L80 54" stroke="#e8e8e8" stroke-width="2.2"/><path d="M64 64 L80 55.5" stroke="#909090" stroke-width="0.8"/>
  </svg>
  <!-- checkbox -->
  <div class="a" style="left:6px;top:319px;width:13px;height:13px;box-sizing:border-box;border-top:1px solid #808080;border-left:1px solid #808080;border-right:1px solid #fff;border-bottom:1px solid #fff;background:#fff;"></div>
  <div class="a" style="left:7px;top:320px;width:11px;height:11px;box-sizing:border-box;border-top:1px solid #b0b0b0;border-left:1px solid #b0b0b0;border-right:1px solid #f0f0f0;border-bottom:1px solid #f0f0f0;"></div>
  <!-- separator -->
  <div class="a" style="left:3px;top:339px;width:357px;height:1px;background:#202020;"></div>
  <div class="a" style="left:3px;top:340px;width:357px;height:1px;background:#d8d8d8;"></div>
  <!-- buttons -->
  <div class="a" style="left:94px;top:349px;width:75px;height:23px;box-sizing:border-box;border:1px solid #000;background:#ece9d8;"></div>
  <div class="a" style="left:95px;top:350px;width:73px;height:21px;box-sizing:border-box;border-top:1px solid #fff;border-left:1px solid #fff;border-right:1px solid #716f64;border-bottom:1px solid #716f64;"></div>
  <div class="a" style="left:194px;top:349px;width:75px;height:23px;box-sizing:border-box;border-top:1px solid #fff;border-left:1px solid #fff;border-right:1px solid #404040;border-bottom:1px solid #404040;background:#ece9d8;"></div>
  <div class="a" style="left:195px;top:350px;width:73px;height:21px;box-sizing:border-box;border-right:1px solid #8a887c;border-bottom:1px solid #8a887c;"></div>
</div>

<!-- Taskbar -->
<div class="a" id="tb" style="left:0;top:738px;width:1024px;height:30px;z-index:30;background:linear-gradient(#2c5cb8 0,#3a78e8 1px,#4a90f4 2.5px,#2a64e0 4px,#1f52cf 7px,#2256da 11px,#2560e0 24px,#2258d0 27px,#1a40a4 30px);">
  <!-- start button -->
  <div class="a" style="left:0;top:0;width:97px;height:30px;border-radius:0 9px 9px 0 / 0 15px 15px 0;background:linear-gradient(#3c8a3c 0,#6cba6c 1.5px,#4aaa4a 4px,#36a236 9px,#38a838 16px,#309a30 24px,#267a26 30px);box-shadow:inset -4px 0 5px rgba(0,50,0,0.45), inset 1px 0 0 #70b870;"></div>
  <svg class="a" style="left:10px;top:5px" width="20" height="18" viewBox="0 0 20 18">
    <path d="M2 2 Q5 0.5 9 2 L8 8 Q4.5 6.5 1 8Z" fill="#f05a28"/>
    <path d="M10 2 Q13.5 3.5 18 2 L17 8.5 Q13 10 9 8.5Z" fill="#7cc242"/>
    <path d="M1 9 Q4.5 7.5 8 9 L7 15 Q3.5 13.5 0 15Z" fill="#30a0f0"/>
    <path d="M9 9.5 Q13 11 17 9.5 L16 16 Q12 17.5 8 16Z" fill="#f8c020"/>
  </svg>
  <span class="a" style="left:34.5px;top:6.5px;font:italic bold 17.5px 'Liberation Sans',sans-serif;color:#f4fff0;line-height:1;text-shadow:1px 1px 1px #1a4a1a;letter-spacing:0px;-webkit-text-stroke:0.4px #f4fff0;">start</span>
  <!-- quick launch -->
  <svg class="a" style="left:108px;top:6px" width="18" height="18" viewBox="0 0 18 18"><circle cx="9" cy="9" r="8" fill="#1e7a2e" stroke="#b8ecb8" stroke-width="1.3"/><path d="M5.5 4.5 V10 Q5.5 12.5 8.5 12.5 Q11.5 12.5 11.5 10 V4.5" fill="none" stroke="#c8f4a8" stroke-width="2.6"/><path d="M6.5 10 L6 15.5" stroke="#c8f4a8" stroke-width="2.4"/></svg>
  <svg class="a" style="left:131px;top:6px" width="18" height="18" viewBox="0 0 18 18"><circle cx="9" cy="9" r="7.6" fill="#6ab2dc" stroke="#3a7ab8" stroke-width="1.2"/><text x="9" y="11.3" font-family="Liberation Sans" font-size="6" font-weight="bold" fill="#fff" text-anchor="middle">xps</text></svg>
  <svg class="a" style="left:153px;top:5px" width="19" height="19" viewBox="0 0 19 19"><path d="M9.5 4 C5 4 3 7 3 10.5 C3 14 5.5 16 9 16 C12 16 13.5 14.5 14.5 13 L11.5 13 Q10.5 14 9 14 Q6.5 14 6 11.5 L15 11.5 C15.5 7 13 4 9.5 4Z M6.2 9.3 Q6.8 6.5 9.3 6.5 Q11.8 6.5 12 9.3Z" fill="#5ab4f0"/><path d="M2 15 Q0 12 6 7 Q13 1 17 2 Q19 4 14 9" fill="none" stroke="#a8d8ff" stroke-width="1.3"/></svg>
  <svg class="a" style="left:181px;top:6px" width="11" height="9" viewBox="0 0 11 9"><path d="M1 1 L4 4 L1 7 M5 1 L8 4 L5 7" fill="none" stroke="#c8dcff" stroke-width="1.3"/></svg>
  <div class="a" style="left:196px;top:0;width:1px;height:30px;background:#1a46a8;"></div>
  <!-- task buttons -->
  <div class="a" style="left:198px;top:3px;width:159px;height:25px;border-radius:3px;background:linear-gradient(#4c8af4,#3c80f4 40%,#3a7cf0);box-shadow:inset 1px 1px 0 #6aa0ff, inset -1px -1px 0 #2050c0;"></div>
  <svg class="a" style="left:209px;top:7px" width="15" height="16" viewBox="0 0 15 16"><ellipse cx="7.5" cy="8" rx="6.8" ry="7.5" fill="#d81818"/><ellipse cx="7.5" cy="8" rx="2.8" ry="5" fill="#fff"/><ellipse cx="7.5" cy="8" rx="1.8" ry="4.2" fill="#f0f0f0"/></svg>
  <div class="a" style="left:359px;top:3px;width:158px;height:25px;border-radius:3px;background:linear-gradient(#4c8af4,#3c80f4 40%,#3a7cf0);box-shadow:inset 1px 1px 0 #6aa0ff, inset -1px -1px 0 #2050c0;"></div>
  <svg class="a" style="left:368px;top:7px" width="16" height="15" viewBox="0 0 16 15"><rect x="1.5" y="1.2" width="8.5" height="12.5" rx="1" fill="#1a2a70"/><rect x="2.8" y="2.2" width="6.5" height="10.5" fill="#eef4fa"/><rect x="4" y="6" width="3" height="3" fill="#c8c890"/><path d="M8.5 9 L14.5 5.5" stroke="#1a2a70" stroke-width="2.2"/><path d="M9 8.6 L14 5.8" stroke="#b8d0f0" stroke-width="0.9"/></svg>
  <div class="a" style="left:519px;top:3px;width:157px;height:25px;border-radius:3px;background:linear-gradient(#4c8af4,#3c80f4 40%,#3a7cf0);box-shadow:inset 1px 1px 0 #6aa0ff, inset -1px -1px 0 #2050c0;"></div>
  <svg class="a" style="left:528px;top:6px" width="16" height="16" viewBox="0 0 16 16"><rect x="4" y="0.5" width="9" height="7" fill="#f4f4f4" stroke="#c8c8c8" stroke-width="0.5"/><rect x="12.6" y="0.3" width="1.4" height="6.6" fill="#101010"/><rect x="5.2" y="2" width="5.8" height="4.2" fill="#1020b0"/><rect x="5.8" y="2.6" width="1" height="1" fill="#8090f0"/><rect x="4" y="7.3" width="9" height="1.1" fill="#101010"/><path d="M1 12.8 L2.8 9.2 L12.5 9.2 L13.5 12.8Z" fill="#f0f0f0"/><path d="M3 10.9 H12" stroke="#101010" stroke-width="1.1" stroke-dasharray="1 1"/><rect x="0" y="12.5" width="11" height="1.3" fill="#101010"/><path d="M14 8.5 Q15.3 11 14.5 13 Q13.5 14.8 11 14.8" fill="none" stroke="#101010" stroke-width="1.3"/></svg>
  <div class="a" style="left:678px;top:3px;width:160px;height:25px;border-radius:3px;background:#1e4cc0;box-shadow:inset 1px 1px 1px #14368a, inset -1px -1px 0 #3a70e0;"></div>
  <svg class="a" style="left:688px;top:7px" width="17" height="16" viewBox="0 0 17 16"><rect x="0.5" y="0.5" width="15.5" height="15" fill="#0a1040" /><rect x="1.2" y="1.2" width="14" height="13.5" fill="#f0f0f8"/><rect x="3" y="3" width="11" height="10.5" fill="#1420c8"/><path d="M5 12 L12.5 4.5" stroke="#50d890" stroke-width="2.4"/><path d="M6 11 L11.5 5.5" stroke="#30c050" stroke-width="1.2"/></svg>
  <!-- tray -->
  <div class="a" style="left:931px;top:0;width:93px;height:30px;background:linear-gradient(#1a5aa0 0,#30a8f8 1px,#22a0f4 3px,#1896ee 10px,#168ce8 22px,#1282dc 28px,#1070c8 30px);box-shadow:inset 1px 0 0 #1060c0;"></div>
  <svg class="a" style="left:922px;top:6px" width="18" height="18" viewBox="0 0 18 18"><circle cx="9" cy="9" r="8.3" fill="#3e8ee6" stroke="#1a4aa8" stroke-width="1.2"/><path d="M11 4.5 L6.5 9 L11 13.5" fill="none" stroke="#fff" stroke-width="2.2"/></svg>
  <svg class="a" style="left:942px;top:6px" width="14" height="16" viewBox="0 0 14 16"><circle cx="7" cy="8" r="6" fill="#4a5468"/><circle cx="5.5" cy="5.5" r="2.2" fill="#c8d0e0"/><circle cx="8" cy="11" r="2" fill="#1a2a50"/></svg>
  <div class="a" style="left:960px;top:7px;width:16px;height:15px;background:linear-gradient(#e05848,#c02838);"></div>
  <svg class="a" style="left:960px;top:7px" width="16" height="15" viewBox="0 0 16 15"><path d="M3 12 Q6 3 12 4 Q14 6 11 9" fill="none" stroke="#f0d0d0" stroke-width="1.8"/></svg>
</div>
<span class="a" style="left:937.5px;top:750px;z-index:60;font:bold 15.2px 'Liberation Mono',monospace;color:#fff;line-height:1;letter-spacing:-0.3px;text-shadow:1px 1px 0 rgba(60,60,80,0.5);">mycity.rs</span>

<span class="t" style="left:225.50px;top:392.69px;font-size:11px;letter-spacing:-0.271px;">Cameras</span><span class="t" style="left:309.25px;top:392.69px;font-size:11px;letter-spacing:-0.156px;">Tasks</span><span class="t" style="left:218.10px;top:454.69px;font-size:11px;letter-spacing:-0.014px;">Taskbar and</span><span class="t" style="left:220.65px;top:467.69px;font-size:11px;letter-spacing:0.099px;">Start Menu</span><span class="t" style="left:288.35px;top:454.69px;font-size:11px;letter-spacing:-0.135px;">User Accounts</span><span class="t" style="left:376.15px;top:454.69px;font-size:11px;letter-spacing:-0.154px;">Windows</span><span class="t" style="left:378.60px;top:467.69px;font-size:11px;letter-spacing:-0.015px;">Firewall</span><span class="t" style="left:451.85px;top:454.69px;font-size:11px;letter-spacing:-0.267px;">Wireless</span><span class="t" style="left:436.50px;top:467.69px;font-size:11px;letter-spacing:0.225px;">Network Set...</span><span class="t" style="left:414.00px;top:10.00px;font-size:13px;font-weight:bold;color:#dfe8fa;letter-spacing:-0.231px;text-shadow:1px 1px 0 #6a7fc0;">Device Manager</span><span class="t" style="left:401.00px;top:34.69px;font-size:11px;">File</span><span class="t" style="left:434.00px;top:34.69px;font-size:11px;">Action</span><span class="t" style="left:480.00px;top:34.69px;font-size:11px;">View</span><span class="t" style="left:518.00px;top:34.69px;font-size:11px;">Help</span><span class="t" style="left:434.00px;top:85.69px;font-size:11px;letter-spacing:-0.859px;">COMPUTER-1</span><span class="t" style="left:452.00px;top:101.69px;font-size:11px;letter-spacing:-0.100px;">Computer</span><span class="t" style="left:452.00px;top:117.69px;font-size:11px;letter-spacing:-0.180px;">Disk drives</span><span class="t" style="left:452.00px;top:133.69px;font-size:11px;letter-spacing:-0.062px;">Display adapters</span><span class="t" style="left:452.00px;top:149.69px;font-size:11px;letter-spacing:-0.369px;">DVD/CD-ROM drives</span><span class="t" style="left:452.00px;top:165.69px;font-size:11px;letter-spacing:-0.111px;">Floppy disk controllers</span><span class="t" style="left:452.00px;top:181.69px;font-size:11px;letter-spacing:0.018px;">IDE ATA/ATAPI controllers</span><span class="t" style="left:452.00px;top:197.69px;font-size:11px;letter-spacing:-0.074px;">Keyboards</span><span class="t" style="left:452.00px;top:213.69px;font-size:11px;letter-spacing:-0.091px;">Mice and other pointing devices</span><span class="t" style="left:452.00px;top:229.69px;font-size:11px;letter-spacing:-0.027px;">Monitors</span><span class="t" style="left:452.00px;top:245.69px;font-size:11px;letter-spacing:0.025px;">Network adapters</span><span class="t" style="left:452.00px;top:261.69px;font-size:11px;letter-spacing:-0.143px;">NVIDIA Network Bus Enumerator</span><span class="t" style="left:452.00px;top:277.69px;font-size:11px;letter-spacing:0.010px;">Other devices</span><span class="t" style="left:471.00px;top:293.69px;font-size:11px;letter-spacing:-0.307px;">PCI Simple Communications Controller</span><span class="t" style="left:452.00px;top:309.69px;font-size:11px;letter-spacing:-0.365px;">Ports (COM &amp; LPT)</span><span class="t" style="left:452.00px;top:325.69px;font-size:11px;letter-spacing:-0.226px;">Processors</span><span class="t" style="left:452.00px;top:341.69px;font-size:11px;letter-spacing:-0.094px;">Sound, video and game controllers</span><span class="t" style="left:452.00px;top:357.69px;font-size:11px;letter-spacing:-0.110px;">Storage volumes</span><span class="t" style="left:452.00px;top:373.69px;font-size:11px;letter-spacing:-0.156px;">System devices</span><span class="t" style="left:452.00px;top:389.69px;font-size:11px;letter-spacing:-0.201px;">Universal Serial Bus controllers</span><span class="t" style="left:54.00px;top:81.69px;font-size:11px;letter-spacing:-0.111px;">What did you plug into the green jack?</span><span class="t" style="left:7.00px;top:122.69px;font-size:11px;letter-spacing:-0.212px;">Stereo Array Microphone</span><span class="t" style="left:25.00px;top:320.19px;font-size:11px;letter-spacing:-0.072px;">Don't detect new audio devices in the future</span><span class="t" style="left:124.50px;top:354.69px;font-size:11px;letter-spacing:-0.906px;">OK</span><span class="t" style="left:214.00px;top:354.69px;font-size:11px;letter-spacing:0.150px;">Cancel</span><span class="t" style="left:227.00px;top:747.69px;font-size:11px;color:#fff;letter-spacing:0.098px;">Pravljenje screenshot...</span><span class="t" style="left:387.00px;top:747.69px;font-size:11px;color:#fff;">Control Panel</span><span class="t" style="left:547.00px;top:747.69px;font-size:11px;color:#fff;letter-spacing:-0.184px;">Device Manager</span><span class="t" style="left:708.50px;top:747.69px;font-size:11px;color:#fff;letter-spacing:-0.665px;">AudioESP</span><span class="t" style="left:896.50px;top:748.69px;font-size:11px;color:#fff;letter-spacing:-1.381px;">EN</span><span class="t" style="left:984.00px;top:747.69px;font-size:11px;color:#e8f4ff;letter-spacing:-0.133px;">18:47</span>
</body></html>
